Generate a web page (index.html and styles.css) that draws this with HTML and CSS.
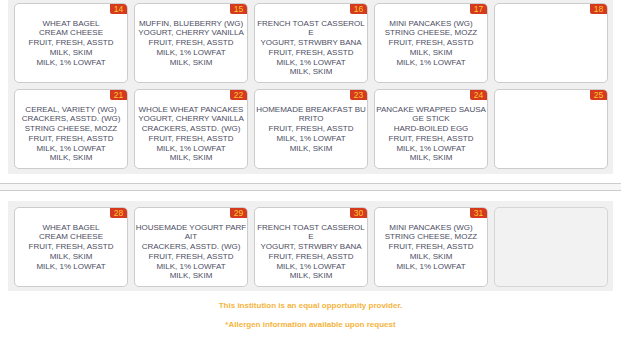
FILE: index.html
```html
<!DOCTYPE html>
<html>
<head>
<meta charset="utf-8">
<link rel="stylesheet" href="styles.css">
</head>
<body>
<div class="wrap">
<div class="week first">
  <div class="day"><div class="num">14</div><div class="menu">WHEAT BAGEL<br>CREAM CHEESE<br>FRUIT, FRESH, ASSTD<br>MILK, SKIM<br>MILK, 1% LOWFAT</div></div>
  <div class="day"><div class="num">15</div><div class="menu">MUFFIN, BLUEBERRY (WG)<br>YOGURT, CHERRY VANILLA<br>FRUIT, FRESH, ASSTD<br>MILK, 1% LOWFAT<br>MILK, SKIM</div></div>
  <div class="day"><div class="num">16</div><div class="menu">FRENCH TOAST CASSEROLE<br>YOGURT, STRWBRY BANA<br>FRUIT, FRESH, ASSTD<br>MILK, 1% LOWFAT<br>MILK, SKIM</div></div>
  <div class="day"><div class="num">17</div><div class="menu">MINI PANCAKES (WG)<br>STRING CHEESE, MOZZ<br>FRUIT, FRESH, ASSTD<br>MILK, SKIM<br>MILK, 1% LOWFAT</div></div>
  <div class="day"><div class="num">18</div><div class="menu"></div></div>
  <div class="day"><div class="num">21</div><div class="menu">CEREAL, VARIETY (WG)<br>CRACKERS, ASSTD. (WG)<br>STRING CHEESE, MOZZ<br>FRUIT, FRESH, ASSTD<br>MILK, 1% LOWFAT<br>MILK, SKIM</div></div>
  <div class="day"><div class="num">22</div><div class="menu">WHOLE WHEAT PANCAKES<br>YOGURT, CHERRY VANILLA<br>CRACKERS, ASSTD. (WG)<br>FRUIT, FRESH, ASSTD<br>MILK, 1% LOWFAT<br>MILK, SKIM</div></div>
  <div class="day"><div class="num">23</div><div class="menu">HOMEMADE BREAKFAST BURRITO<br>FRUIT, FRESH, ASSTD<br>MILK, 1% LOWFAT<br>MILK, SKIM</div></div>
  <div class="day"><div class="num">24</div><div class="menu">PANCAKE WRAPPED SAUSAGE STICK<br>HARD-BOILED EGG<br>FRUIT, FRESH, ASSTD<br>MILK, 1% LOWFAT<br>MILK, SKIM</div></div>
  <div class="day"><div class="num">25</div><div class="menu"></div></div>
</div>
</div>
<div class="divider"></div>
<div class="wrap">
<div class="week second">
  <div class="day"><div class="num">28</div><div class="menu">WHEAT BAGEL<br>CREAM CHEESE<br>FRUIT, FRESH, ASSTD<br>MILK, SKIM<br>MILK, 1% LOWFAT</div></div>
  <div class="day"><div class="num">29</div><div class="menu">HOUSEMADE YOGURT PARFAIT<br>CRACKERS, ASSTD. (WG)<br>FRUIT, FRESH, ASSTD<br>MILK, 1% LOWFAT<br>MILK, SKIM</div></div>
  <div class="day"><div class="num">30</div><div class="menu">FRENCH TOAST CASSEROLE<br>YOGURT, STRWBRY BANA<br>FRUIT, FRESH, ASSTD<br>MILK, 1% LOWFAT<br>MILK, SKIM</div></div>
  <div class="day"><div class="num">31</div><div class="menu">MINI PANCAKES (WG)<br>STRING CHEESE, MOZZ<br>FRUIT, FRESH, ASSTD<br>MILK, SKIM<br>MILK, 1% LOWFAT</div></div>
  <div class="day blank"></div>
</div>
<div class="footer">
  <p>This institution is an equal opportunity provider.</p>
  <p>*Allergen information available upon request</p>
</div>
</div>
</body>
</html>
```
FILE: styles.css
```css
html, body {
  margin: 0;
  padding: 0;
  background: #ffffff;
}
body {
  font-family: "Liberation Sans", Arial, sans-serif;
}
.wrap {
  padding: 0 8px;
}
.week {
  width: 605px;
  box-sizing: border-box;
  background: #f0f0f0;
  display: grid;
  grid-template-columns: repeat(5, 114px);
  column-gap: 6px;
  row-gap: 6px;
  padding: 3px 6px 5px 6px;
}
.week.second {
  padding: 6px 6px 4px 6px;
}
.day {
  height: 80px;
  box-sizing: border-box;
  background: #ffffff;
  border: 1px solid #cccccc;
  border-radius: 5px;
  display: flex;
  flex-direction: column;
}
.day.blank {
  background: #f2f2f2;
  border-color: #d6d6d6;
}
.num {
  align-self: flex-end;
  width: 17px;
  height: 10px;
  background: #d63a1e;
  color: #ffc72c;
  font-size: 8.5px;
  line-height: 10px;
  text-align: center;
  border-radius: 0 4px 0 2px;
}
.menu {
  margin-top: 4.5px;
  padding: 0;
  font-size: 8px;
  line-height: 9.8px;
  color: #4c4d62;
  text-align: center;
  word-break: break-all;
}
.divider {
  margin: 9px 0 10px 0;
  height: 6px;
  border-top: 1px solid #cccccc;
  border-bottom: 1px solid #cccccc;
  background: #f6f6f6;
}
.footer {
  width: 605px;
  text-align: center;
  padding-top: 10px;
}
.footer p {
  margin: 0 0 9px 0;
  font-size: 8px;
  line-height: 10px;
  font-weight: bold;
  color: #f5b43c;
}
```
